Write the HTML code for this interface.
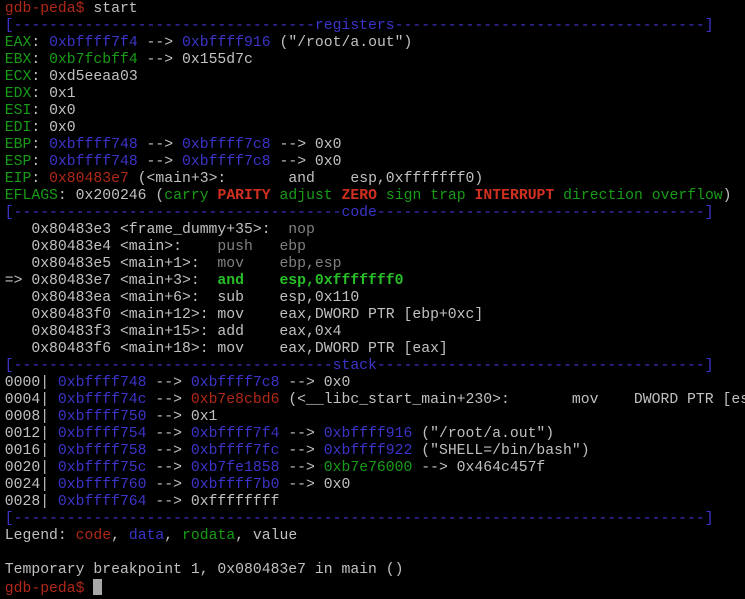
<!DOCTYPE html>
<html><head><meta charset="utf-8"><style>
html,body{margin:0;padding:0;background:#000;width:745px;height:599px;overflow:hidden}
pre{margin:0;padding:1px 0 0 4.75px;width:740px;overflow:hidden;font-family:"Liberation Mono",monospace;font-size:14.77px;line-height:17px;color:#c0c0c0;white-space:pre}
.b{color:#3c34c8}.g{color:#189c18}.r{color:#b02818}.d{color:#808080}
.rb{color:#d03020;font-weight:bold}.gb{color:#28c028;font-weight:bold}
.cur{display:inline-block;width:9px;height:16px;background:#a8a8a8;vertical-align:-3px}
</style></head><body><pre><span class="r">gdb-peda$</span> start
<span class="b">[----------------------------------registers-----------------------------------]</span>
<span class="g">EAX</span>: <span class="b">0xbffff7f4</span> --&gt; <span class="b">0xbffff916</span> ("/root/a.out")
<span class="g">EBX</span>: <span class="g">0xb7fcbff4</span> --&gt; 0x155d7c
<span class="g">ECX</span>: 0xd5eeaa03
<span class="g">EDX</span>: 0x1
<span class="g">ESI</span>: 0x0
<span class="g">EDI</span>: 0x0
<span class="g">EBP</span>: <span class="b">0xbffff748</span> --&gt; <span class="b">0xbffff7c8</span> --&gt; 0x0
<span class="g">ESP</span>: <span class="b">0xbffff748</span> --&gt; <span class="b">0xbffff7c8</span> --&gt; 0x0
<span class="g">EIP</span>: <span class="r">0x80483e7</span> (&lt;main+3&gt;:       and    esp,0xfffffff0)
<span class="g">EFLAGS</span>: 0x200246 (<span class="g">carry</span> <span class="rb">PARITY</span> <span class="g">adjust</span> <span class="rb">ZERO</span> <span class="g">sign</span> <span class="g">trap</span> <span class="rb">INTERRUPT</span> <span class="g">direction</span> <span class="g">overflow</span>)
<span class="b">[-------------------------------------code-------------------------------------]</span>
   0x80483e3 &lt;frame_dummy+35&gt;:  <span class="d">nop</span>
   0x80483e4 &lt;main&gt;:    <span class="d">push   ebp</span>
   0x80483e5 &lt;main+1&gt;:  <span class="d">mov    ebp,esp</span>
=&gt; 0x80483e7 &lt;main+3&gt;:  <span class="gb">and    esp,0xfffffff0</span>
   0x80483ea &lt;main+6&gt;:  sub    esp,0x110
   0x80483f0 &lt;main+12&gt;: mov    eax,DWORD PTR [ebp+0xc]
   0x80483f3 &lt;main+15&gt;: add    eax,0x4
   0x80483f6 &lt;main+18&gt;: mov    eax,DWORD PTR [eax]
<span class="b">[------------------------------------stack-------------------------------------]</span>
0000| <span class="b">0xbffff748</span> --&gt; <span class="b">0xbffff7c8</span> --&gt; 0x0
0004| <span class="b">0xbffff74c</span> --&gt; <span class="r">0xb7e8cbd6</span> (&lt;__libc_start_main+230&gt;:       mov    DWORD PTR [esp],eax)
0008| <span class="b">0xbffff750</span> --&gt; 0x1
0012| <span class="b">0xbffff754</span> --&gt; <span class="b">0xbffff7f4</span> --&gt; <span class="b">0xbffff916</span> ("/root/a.out")
0016| <span class="b">0xbffff758</span> --&gt; <span class="b">0xbffff7fc</span> --&gt; <span class="b">0xbffff922</span> ("SHELL=/bin/bash")
0020| <span class="b">0xbffff75c</span> --&gt; <span class="b">0xb7fe1858</span> --&gt; <span class="g">0xb7e76000</span> --&gt; 0x464c457f
0024| <span class="b">0xbffff760</span> --&gt; <span class="b">0xbffff7b0</span> --&gt; 0x0
0028| <span class="b">0xbffff764</span> --&gt; 0xffffffff
<span class="b">[------------------------------------------------------------------------------]</span>
Legend: <span class="r">code</span>, <span class="b">data</span>, <span class="g">rodata</span>, value

Temporary breakpoint 1, 0x080483e7 in main ()
<span class="r">gdb-peda$</span> <span class="cur"></span></pre></body></html>
